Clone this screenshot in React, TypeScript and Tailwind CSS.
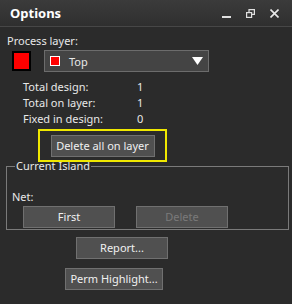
import React from "react";

const Btn: React.FC<{ className?: string; disabled?: boolean; children: React.ReactNode }> = ({ className = "", disabled, children }) => (
  <button
    className={`h-[22px] border border-[#707070] bg-[#505050] text-[11px] leading-[20px] ${disabled ? "text-[#7a7a7a]" : "text-[#f0f0f0]"} ${className}`}
  >
    {children}
  </button>
);

const App: React.FC = () => {
  return (
    <div
      className="w-[292px] h-[304px] bg-[#2b2b2b] text-[#e8e8e8] text-[11px] overflow-hidden"
      style={{ fontFamily: '"Noto Sans", "Open Sans", sans-serif' }}
    >
      <div className="h-[27px] flex items-center border-b border-[#474747] bg-gradient-to-b from-[#3b3b3b] to-[#2f2f2f] pl-[10px] pr-[13px]">
        <span className="text-[13px] font-bold text-white leading-none">Options</span>
        <div className="ml-auto flex items-center gap-[15px]">
          <svg width="9" height="10" viewBox="0 0 9 10">
            <rect x="0" y="8" width="9" height="2" fill="#e0e0e0" />
          </svg>
          <svg width="9" height="9" viewBox="0 0 9 9" fill="none" stroke="#e0e0e0" strokeWidth="1.2">
            <rect x="0.6" y="3.6" width="5" height="4.8" />
            <path d="M3 3.6V0.6h5.4v4.8H5.6" />
          </svg>
          <svg width="9" height="9" viewBox="0 0 9 9" stroke="#e8e8e8" strokeWidth="1.6">
            <path d="M0.5 0.5L8.5 8.5M8.5 0.5L0.5 8.5" />
          </svg>
        </div>
      </div>

      <div className="ml-[7px] mt-[6px] leading-[16px]">Process layer:</div>

      <div className="flex items-center mt-[1px]">
        <div className="ml-[12px] w-[19px] h-[20px] border-2 border-black bg-[#ff0000]" />
        <div className="ml-[13px] w-[165px] h-[22px] border border-[#6c6c6c] bg-[#444444] flex items-center">
          <div className="ml-[5px] w-[10px] h-[10px] border border-white bg-[#ff0000]" />
          <span className="ml-[9px] leading-none">Top</span>
          <svg className="ml-auto mr-[5px]" width="11" height="8" viewBox="0 0 11 8">
            <path d="M0 0H11L5.5 8Z" fill="#ffffff" />
          </svg>
        </div>
      </div>

      <div className="grid grid-cols-[114px_auto] ml-[23px] mt-[7px] leading-[16px]">
        <span>Total design:</span>
        <span>1</span>
        <span>Total on layer:</span>
        <span>1</span>
        <span>Fixed in design:</span>
        <span>0</span>
      </div>

      <div className="ml-[38px] mt-[2px] w-[129px] h-[33px] border-2 border-[#f0e800] flex items-center justify-center">
        <Btn className="w-[104px]">Delete all on layer</Btn>
      </div>

      <fieldset className="ml-[6px] w-[283px] h-[71px] border border-[#7a7a7a] mt-[-3px] px-[5px] pb-0">
        <legend className="ml-[3px] px-[1px] leading-[14px]">Current Island</legend>
        <div className="mt-[17px] leading-[14px]">Net:</div>
        <div className="flex mt-[2px]">
          <Btn className="ml-[11px] w-[92px]">First</Btn>
          <Btn className="ml-[21px] w-[92px]" disabled>
            Delete
          </Btn>
        </div>
      </fieldset>

      <Btn className="block ml-[76px] mt-[7px] w-[92px]">Report...</Btn>
      <Btn className="block ml-[65px] mt-[9px] w-[98px]">Perm Highlight...</Btn>
    </div>
  );
};

export default App;
